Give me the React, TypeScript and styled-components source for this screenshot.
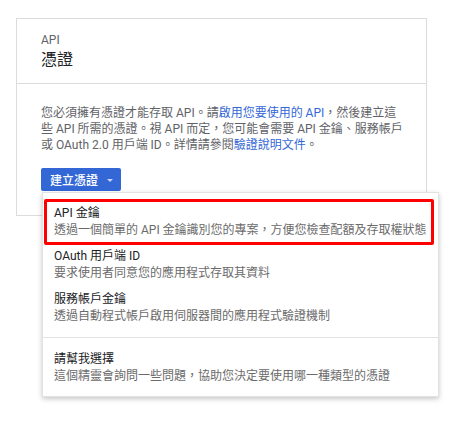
import React from "react";
import styled, { createGlobalStyle } from "styled-components";

const GlobalStyle = createGlobalStyle`
  html, body {
    margin: 0;
    background: #ffffff;
  }
  body {
    font-family: Roboto, "Noto Sans CJK TC", "Noto Sans", sans-serif;
    -webkit-font-smoothing: antialiased;
  }
`;

const Page = styled.div`
  box-sizing: border-box;
  min-height: 431px;
  padding: 18px 0 0 16px;
`;

const Card = styled.section`
  width: 409px;
  border: 1px solid #dcdcdc;
  background: #fff;
`;

const CardHeader = styled.header`
  padding: 13px 24px 11px;
  border-bottom: 1px solid #dcdcdc;
`;

const Eyebrow = styled.div`
  font-size: 12px;
  line-height: 16px;
  color: #5f6368;
`;

const Title = styled.h1`
  margin: 0;
  font-size: 16px;
  line-height: 24px;
  font-weight: 400;
  color: #202124;
`;

const CardBody = styled.div`
  padding: 21px 24px 24px;
`;

const Description = styled.p`
  margin: 0;
  font-size: 12px;
  line-height: 16px;
  color: #5f6368;
  white-space: nowrap;
`;

const Link = styled.a`
  color: #3367d6;
  text-decoration: none;
`;

const ButtonWrap = styled.div`
  position: relative;
  display: inline-block;
  margin-top: 15px;
  vertical-align: top;
`;

const PrimaryButton = styled.button`
  display: flex;
  align-items: center;
  gap: 9px;
  height: 23px;
  width: 80px;
  padding: 0 0 0 9px;
  border: none;
  border-radius: 2px;
  background: #3367d6;
  color: #fff;
  font-family: inherit;
  font-size: 12px;
  font-weight: 500;
  cursor: pointer;
`;

const Caret = styled.span`
  width: 0;
  height: 0;
  border-left: 3px solid transparent;
  border-right: 3px solid transparent;
  border-top: 3px solid #c7d5f4;
  margin-top: 1px;
`;

const Menu = styled.div`
  position: absolute;
  top: calc(100% + 1px);
  left: 1px;
  width: 395px;
  padding: 7px 0 7px;
  background: #fff;
  border: 1px solid #e2e2e2;
  box-shadow: 0 2px 5px rgba(0, 0, 0, 0.22);
  z-index: 10;
`;

const MenuItem = styled.div`
  position: relative;
  padding: 5px 11px 4px;
  cursor: pointer;
`;

const Highlight = styled.span`
  position: absolute;
  top: -1px;
  bottom: -2px;
  left: 1px;
  right: 4px;
  border: 3px solid #ff0000;
  border-radius: 2px;
  pointer-events: none;
`;

const ItemTitle = styled.div`
  font-size: 12px;
  line-height: 17px;
  color: #202124;
`;

const ItemDesc = styled.div`
  font-size: 12px;
  line-height: 17px;
  color: #6b6b6b;
  white-space: nowrap;
`;

const MenuDivider = styled.hr`
  margin: 8px 0;
  border: none;
  border-top: 1px solid #e3e3e3;
`;

const items = [
  {
    title: "API 金鑰",
    desc: "透過一個簡單的 API 金鑰識別您的專案，方便您檢查配額及存取權狀態",
    highlighted: true,
  },
  { title: "OAuth 用戶端 ID", desc: "要求使用者同意您的應用程式存取其資料" },
  { title: "服務帳戶金鑰", desc: "透過自動程式帳戶啟用伺服器間的應用程式驗證機制" },
];

export default function App() {
  return (
    <>
      <GlobalStyle />
      <Page>
        <Card>
          <CardHeader>
            <Eyebrow>API</Eyebrow>
            <Title>憑證</Title>
          </CardHeader>
          <CardBody>
            <Description>
              您必須擁有憑證才能存取 API。請<Link href="#">啟用您要使用的 API</Link>，然後建立這
              <br />
              些 API 所需的憑證。視 API 而定，您可能會需要 API 金鑰、服務帳戶
              <br />
              或 OAuth 2.0 用戶端 ID。詳情請參閱<Link href="#">驗證說明文件</Link>。
            </Description>
            <ButtonWrap>
              <PrimaryButton>
                建立憑證
                <Caret />
              </PrimaryButton>
              <Menu>
                {items.map((item) => (
                  <MenuItem key={item.title}>
                    {item.highlighted && <Highlight />}
                    <ItemTitle>{item.title}</ItemTitle>
                    <ItemDesc>{item.desc}</ItemDesc>
                  </MenuItem>
                ))}
                <MenuDivider />
                <MenuItem>
                  <ItemTitle>請幫我選擇</ItemTitle>
                  <ItemDesc>這個精靈會詢問一些問題，協助您決定要使用哪一種類型的憑證</ItemDesc>
                </MenuItem>
              </Menu>
            </ButtonWrap>
          </CardBody>
        </Card>
      </Page>
    </>
  );
}
